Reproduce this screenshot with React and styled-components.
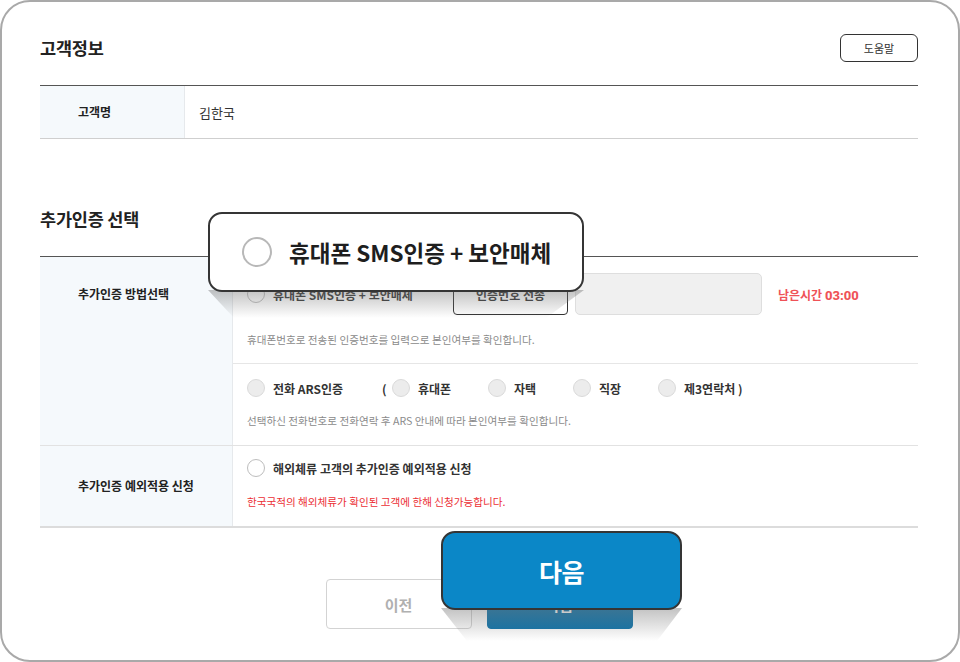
import React from "react";
import styled, { createGlobalStyle } from "styled-components";

const GlobalStyle = createGlobalStyle`
  html, body {
    margin: 0;
    padding: 0;
    background: #fff;
  }
  body {
    font-family: "Noto Sans CJK KR", "Noto Sans", sans-serif;
    color: #222;
  }
`;

const Frame = styled.div`
  position: relative;
  box-sizing: border-box;
  width: 960px;
  height: 662px;
  border: 2px solid #a9a9a9;
  border-radius: 30px;
  padding: 32px 40px 0 38px;
  overflow: hidden;
`;

const Header = styled.div`
  display: flex;
  align-items: center;
  justify-content: space-between;
  height: 28px;
`;

const Title = styled.h2`
  margin: 0;
  font-size: 17.5px;
  font-weight: 700;
  letter-spacing: -0.2px;
  line-height: 24px;
`;

const HelpButton = styled.button`
  box-sizing: border-box;
  width: 78px;
  height: 28px;
  border: 1px solid #333;
  border-radius: 6px;
  background: #fff;
  font-family: inherit;
  font-size: 11px;
  color: #333;
  padding: 0;
`;

const Table = styled.div`
  border-top: 1px solid #555;
  border-bottom: ${(p) => (p.$thick ? "2px solid #dcdcdc" : "1px solid #cfcfcf")};
`;

const Row = styled.div`
  display: grid;
  grid-template-columns: ${(p) => p.$label}px 1fr;
  border-top: ${(p) => (p.$first ? "none" : "1px solid #e2e2e2")};
`;

const Label = styled.div`
  background: #f5f9fc;
  border-right: 1px solid #e6e9ec;
  display: flex;
  justify-content: flex-start;
  padding-left: 38px;
  align-items: ${(p) => (p.$top ? "flex-start" : "center")};
  padding-top: ${(p) => (p.$top ? "28px" : "0")};
  font-size: 12px;
  font-weight: 700;
  letter-spacing: 0;
  line-height: 18px;
  color: #222;
`;

const Value = styled.div`
  display: flex;
  align-items: center;
  padding-left: 14px;
  height: 52px;
  font-size: 13px;
  color: #333;
`;

const Cell = styled.div`
  display: flex;
  flex-direction: column;
`;

const Sub = styled.div`
  padding: ${(p) => p.$pad};
  padding-left: 14px;
  border-top: ${(p) => (p.$line ? "1px solid #e6e6e6" : "none")};
`;

const Line = styled.div`
  display: flex;
  align-items: center;
  height: ${(p) => p.$h || 18}px;
`;

const Radio = styled.span`
  box-sizing: border-box;
  display: inline-block;
  width: 18px;
  height: 18px;
  border-radius: 50%;
  border: 1px solid ${(p) => (p.$disabled ? "#dadada" : "#bdbdbd")};
  background: ${(p) => (p.$disabled ? "#ececec" : "#fff")};
  flex-shrink: 0;
`;

const RadioText = styled.span`
  margin-left: 8px;
  font-size: 12px;
  font-weight: 700;
  letter-spacing: 0;
  color: #333;
  width: ${(p) => (p.$w ? `${p.$w}px` : "auto")};
  white-space: nowrap;
`;

const Paren = styled.span`
  font-size: 12px;
  font-weight: 700;
  color: #333;
  width: 10px;
`;

const SendButton = styled.button`
  box-sizing: border-box;
  margin-left: 35px;
  width: 115px;
  height: 42px;
  border: 1px solid #333;
  border-radius: 4px;
  background: #fff;
  font-family: inherit;
  font-size: 12px;
  font-weight: 700;
  color: #333;
  padding: 0;
`;

const CodeInput = styled.div`
  box-sizing: border-box;
  margin-left: 7px;
  width: 187px;
  height: 42px;
  border: 1px solid #dedede;
  border-radius: 5px;
  background: #f0f0f0;
`;

const Timer = styled.span`
  margin-left: 16px;
  font-size: 12px;
  font-weight: 700;
  color: #ef5257;
  b {
    font-weight: 800;
    font-family: Roboto, "Noto Sans", sans-serif;
    font-size: 13px;
  }
`;

const Help = styled.p`
  margin: ${(p) => p.$mt}px 0 0;
  font-size: 10.6px;
  line-height: 16px;
  letter-spacing: 0;
  color: ${(p) => (p.$red ? "#ec2f35" : "#8a8a8a")};
`;

const Buttons = styled.div`
  display: flex;
  justify-content: center;
  gap: 15px;
  margin-top: 51px;
`;

const NavButton = styled.button`
  box-sizing: border-box;
  width: 146px;
  height: 50px;
  border-radius: 4px;
  font-family: inherit;
  font-size: 15px;
  font-weight: 700;
  padding: 0;
  border: 1px solid ${(p) => (p.$primary ? "#0a72aa" : "#d3d3d3")};
  background: ${(p) => (p.$primary ? "#0a72aa" : "#fff")};
  color: ${(p) => (p.$primary ? "#fff" : "#b0b0b0")};
`;

const Callout = styled.div`
  position: absolute;
  left: ${(p) => p.$x}px;
  top: ${(p) => p.$y}px;
  width: ${(p) => p.$w}px;
  height: ${(p) => p.$h}px;
  z-index: 2;
`;

const CalloutBox = styled.div`
  position: relative;
  z-index: 1;
  box-sizing: border-box;
  width: 100%;
  height: 100%;
  border: 2px solid #353535;
  border-radius: 14px;
  background: ${(p) => (p.$blue ? "#0b87c7" : "#fff")};
  color: ${(p) => (p.$blue ? "#fff" : "#1e1e1e")};
  display: flex;
  align-items: center;
  justify-content: ${(p) => (p.$blue ? "center" : "flex-start")};
  padding-left: ${(p) => (p.$blue ? 0 : 32)}px;
  font-weight: 700;
`;

const Shade = styled.div`
  position: absolute;
  left: 0;
  right: 0;
  top: calc(100% - 2px);
  height: ${(p) => p.$h}px;
  background: linear-gradient(to bottom, rgba(120, 120, 120, 0.45), rgba(200, 200, 200, 0));
  clip-path: polygon(0 0, 100% 0, ${(p) => p.$r}px 100%, ${(p) => p.$l}px 100%);
`;

const BigRadio = styled.span`
  box-sizing: border-box;
  width: 30px;
  height: 30px;
  border-radius: 50%;
  border: 2px solid #b8b8b8;
  background: #fff;
  flex-shrink: 0;
`;

const BigText = styled.span`
  margin-left: 17px;
  font-size: 22.5px;
  letter-spacing: 0;
  white-space: nowrap;
`;

const NextText = styled.span`
  font-size: 25px;
  letter-spacing: -0.5px;
`;

export default function App() {
  return (
    <>
      <GlobalStyle />
      <Frame>
        <Header>
          <Title>고객정보</Title>
          <HelpButton>도움말</HelpButton>
        </Header>

        <Table style={{ marginTop: 23 }}>
          <Row $label={145} $first>
            <Label>고객명</Label>
            <Value>김한국</Value>
          </Row>
        </Table>

        <Title style={{ marginTop: 68 }}>추가인증 선택</Title>

        <Table $thick style={{ marginTop: 25 }}>
          <Row $label={193} $first>
            <Label $top>추가인증 방법선택</Label>
            <Cell>
              <Sub $pad="16px 0 15px">
                <Line $h={42}>
                  <Radio />
                  <RadioText $w={145}>휴대폰 SMS인증 + 보안매체</RadioText>
                  <SendButton>인증번호 전송</SendButton>
                  <CodeInput />
                  <Timer>
                    남은시간 <b>03:00</b>
                  </Timer>
                </Line>
                <Help $mt={17}>휴대폰번호로 전송된 인증번호를 입력으로 본인여부를 확인합니다.</Help>
              </Sub>
              <Sub $line $pad="15px 0 16px">
                <Line>
                  <Radio $disabled />
                  <RadioText $w={109}>전화 ARS인증</RadioText>
                  <Paren>(</Paren>
                  <Radio $disabled />
                  <RadioText $w={70}>휴대폰</RadioText>
                  <Radio $disabled />
                  <RadioText $w={59}>자택</RadioText>
                  <Radio $disabled />
                  <RadioText $w={59}>직장</RadioText>
                  <Radio $disabled />
                  <RadioText>제3연락처 )</RadioText>
                </Line>
                <Help $mt={16}>선택하신 전화번호로 전화연락 후 ARS 안내에 따라 본인여부를 확인합니다.</Help>
              </Sub>
            </Cell>
          </Row>
          <Row $label={193}>
            <Label>추가인증 예외적용 신청</Label>
            <Sub $pad="13px 0 16px">
              <Line>
                <Radio />
                <RadioText>해외체류 고객의 추가인증 예외적용 신청</RadioText>
              </Line>
              <Help $red $mt={17}>한국국적의 해외체류가 확인된 고객에 한해 신청가능합니다.</Help>
            </Sub>
          </Row>
        </Table>

        <Buttons>
          <NavButton>이전</NavButton>
          <NavButton $primary>다음</NavButton>
        </Buttons>

        <Callout $x={206} $y={210} $w={376} $h={80}>
          <Shade $h={28} $l={26} $r={338} />
          <CalloutBox>
            <BigRadio />
            <BigText>휴대폰 SMS인증 + 보안매체</BigText>
          </CalloutBox>
        </Callout>

        <Callout $x={439} $y={529} $w={241} $h={79}>
          <Shade $h={33} $l={26} $r={216} />
          <CalloutBox $blue>
            <NextText>다음</NextText>
          </CalloutBox>
        </Callout>
      </Frame>
    </>
  );
}
